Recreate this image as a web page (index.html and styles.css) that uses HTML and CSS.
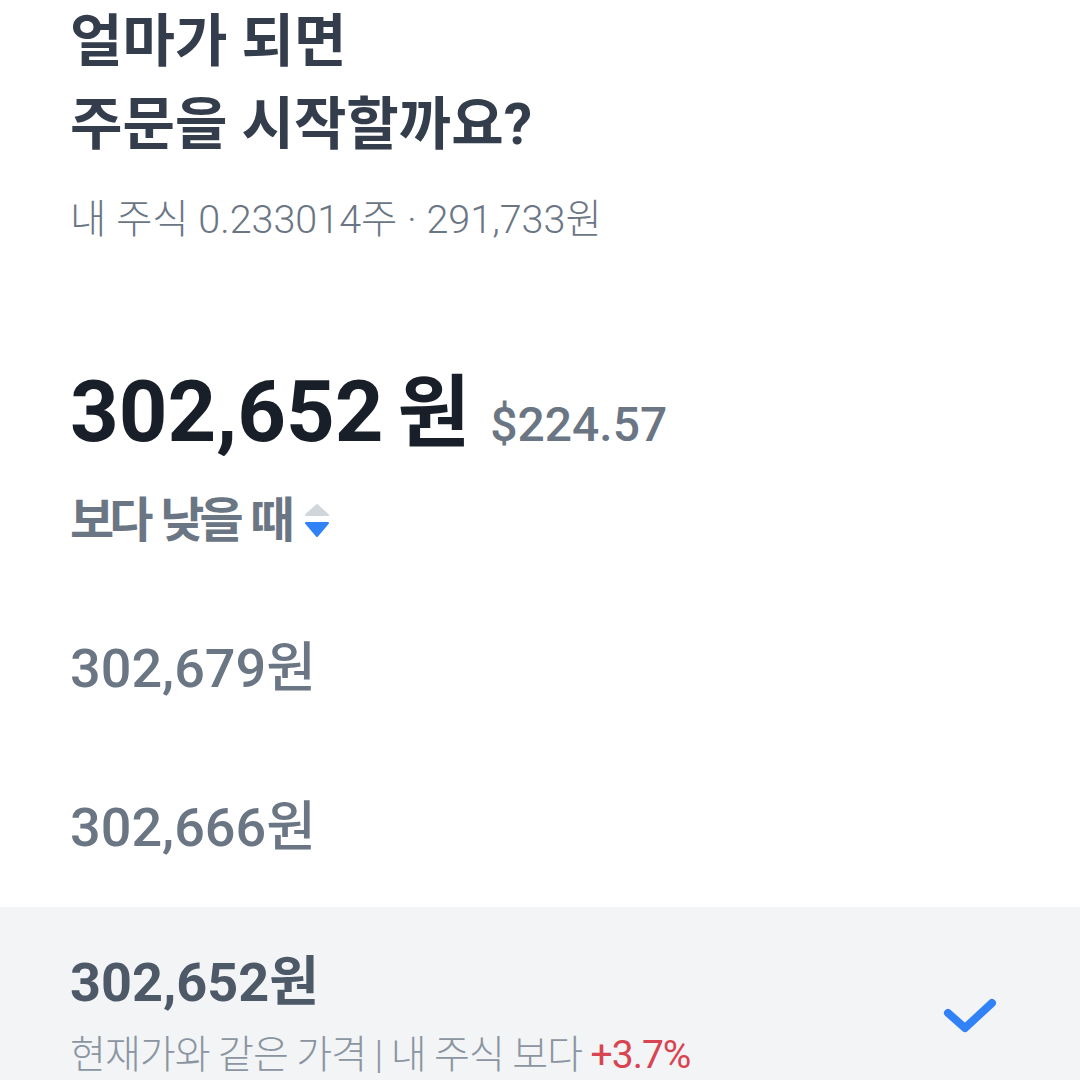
FILE: index.html
```html
<!DOCTYPE html>
<html lang="ko">
<head>
  <meta charset="UTF-8">
  <title>주문 가격 설정</title>
  <link rel="stylesheet" href="styles.css">
</head>
<body>

<main class="order">
  <header class="intro">
    <h1 class="intro-title">얼마가 되면<br>주문을 시작할까요?</h1>
    <p class="holding">내 주식 0.233014주 · 291,733원</p>
  </header>

  <section class="target">
    <div class="target-price">
      <span class="krw">302,652<span class="unit">원</span></span>
      <span class="usd">$224.57</span>
    </div>
    <button class="condition" type="button">
      보다 낮을 때
      <svg class="sort-icon" width="24" height="34" viewBox="0 0 24 34">
        <polygon points="12,1 23,11 1,11" fill="#d1d6db" stroke="#d1d6db" stroke-width="2" stroke-linejoin="round"/>
        <polygon points="1,19 23,19 12,32" fill="#3182f6" stroke="#3182f6" stroke-width="2" stroke-linejoin="round"/>
      </svg>
    </button>
  </section>

  <ul class="price-list">
    <li class="price-item"><span class="price">302,679원</span></li>
    <li class="price-item"><span class="price">302,666원</span></li>
    <li class="price-item is-selected">
      <div class="price-info">
        <span class="price">302,652원</span>
        <span class="note">현재가와 같은 가격 | 내 주식 보다 <em class="rate-up">+3.7%</em></span>
      </div>
      <!-- 선택 표시 -->
      <svg class="check" width="56" height="40" viewBox="0 0 56 40">
        <path d="M6 17 L23 32 L50 7" fill="none" stroke="#3182f6" stroke-width="8" stroke-linecap="round" stroke-linejoin="round"/>
      </svg>
    </li>
  </ul>
</main>

</body>
</html>
```

FILE: styles.css
```css
body {
  margin: 0;
  background: #fff;
  font-family: Roboto, "Noto Sans CJK KR", sans-serif;
  color: #333d4b;
}
.order {
  width: 1080px;
  height: 1080px;
  overflow: hidden;
}
.intro {
  padding: 0 70px;
}
.intro-title {
  margin: 0;
  font-size: 57px;
  line-height: 83px;
  font-weight: 700;
  color: #333d4b;
}
.holding {
  margin: 30px 0 0;
  font-size: 39.5px;
  line-height: 48px;
  font-weight: 300;
  color: #6b7684;
}
.target {
  padding: 0 70px;
  margin-top: 118px;
}
.target-price {
  display: flex;
  align-items: baseline;
  gap: 20px;
  line-height: 100px;
}
.krw {
  font-size: 85px;
  font-weight: 700;
  color: #191f28;
}
.unit {
  margin-left: 14px;
  font-size: 79px;
}
.usd {
  font-size: 48px;
  font-weight: 500;
  color: #6b7684;
}
.condition {
  display: flex;
  align-items: center;
  gap: 15px;
  margin-top: 16px;
  padding: 0;
  border: none;
  background: none;
  font-family: inherit;
  font-size: 48px;
  line-height: 60px;
  font-weight: 700;
  color: #6b7684;
  letter-spacing: -5px;
  word-spacing: 5px;
  cursor: pointer;
}
.price-list {
  list-style: none;
  margin: 38px 0 0;
  padding: 0;
}
.price-item {
  display: flex;
  align-items: center;
  justify-content: space-between;
  height: 159px;
  padding: 0 82px 0 70px;
}
.price {
  font-size: 54px;
  line-height: 64px;
  font-weight: 500;
  color: #6b7684;
}
.is-selected {
  align-items: flex-start;
  height: 200px;
  padding-top: 44px;
  background: #f2f4f6;
  box-sizing: border-box;
}
.is-selected .price {
  font-weight: 700;
  color: #4e5968;
}
.price-info {
  display: flex;
  flex-direction: column;
  gap: 16px;
}
.note {
  font-size: 39px;
  line-height: 48px;
  font-weight: 300;
  color: #8b95a1;
  letter-spacing: -1px;
}
.rate-up {
  font-style: normal;
  font-weight: 400;
  color: #d94452;
}
.check {
  margin-top: 45px;
}
```
